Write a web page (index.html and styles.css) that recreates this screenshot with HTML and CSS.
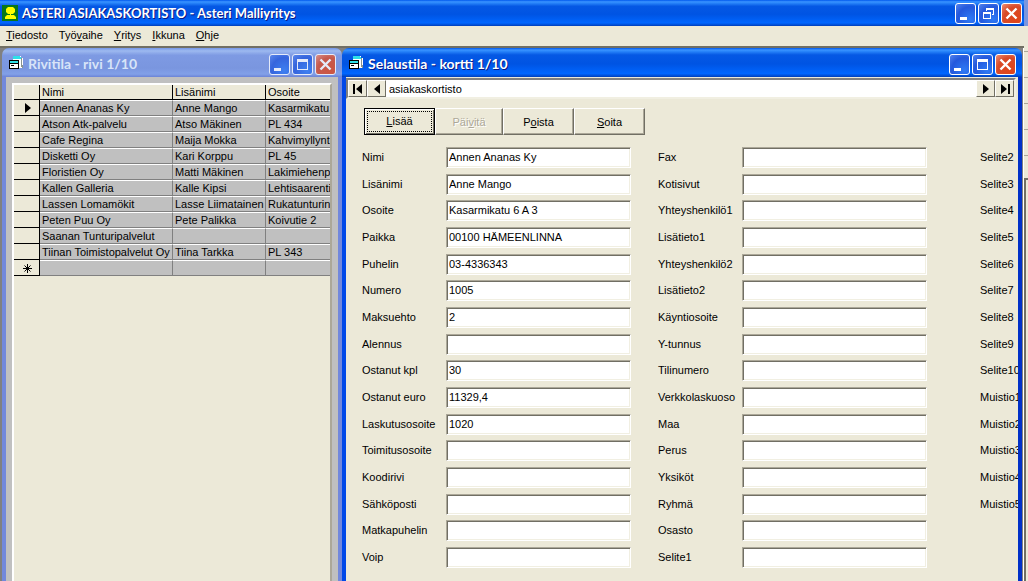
FILE: index.html
```html
<!DOCTYPE html>
<html lang="fi">
<head>
<meta charset="utf-8">
<title>ASTERI ASIAKASKORTISTO - Asteri Malliyritys</title>
<link rel="stylesheet" href="styles.css">
</head>
<body>
<svg class="defs" aria-hidden="true">
  <symbol id="form-icon" viewBox="0 0 16 16">
    <g shape-rendering="crispEdges">
    <path d="M5 0h8v2h2v10H5z" fill="#fff"/><path d="M5 0h7v1h1v2H5z" fill="#2ee0e8"/><path d="M13 2h1v9h-1zM14 9h1v3h-1z" fill="#8a9490"/>
    <path d="M1 4h10v9H1z" fill="#000"/><path d="M2 5h8v2H2z" fill="#2ee0e8"/><path d="M2 8h8v4H2z" fill="#fff"/><path d="M3 9h3v1H3z" fill="#000"/>
    </g>
  </symbol>
  <symbol id="min" viewBox="0 0 19 19"><path d="M4 13h7v3H4z" fill="#fff"/></symbol>
  <symbol id="max" viewBox="0 0 19 19"><path d="M4 4h11v11H4zM5 7v7h9V7z" fill="#fff" fill-rule="evenodd"/></symbol>
  <symbol id="restore" viewBox="0 0 19 19"><path d="M7 4h8v7h-2v-1h1V6H8v1H7zM4 8h8v7H4zM5 10v4h6v-4z" fill="#fff" fill-rule="evenodd"/></symbol>
  <symbol id="close" viewBox="0 0 19 19"><path d="M4.500 4.500l10 10M14.500 4.500l-10 10" stroke="#fff" stroke-width="2.4"/></symbol>
</svg>
<div class="desktop">
  <main class="app">
    <header class="titlebar app-title">
      <svg class="app-icon" viewBox="0 0 16 16"><path d="M0 0h16v16H0z" fill="#087818"/><path d="M6 2h5l2 2v3l-2 2H9v1h3l2 2v2H3v-2l2-2h3V9H6L4 7V4z" fill="#ff0"/></svg>
      <h1>ASTERI ASIAKASKORTISTO - Asteri Malliyritys</h1>
      <div class="controls">
        <button aria-label="Pienennä"><svg><use href="#min"/></svg></button>
        <button aria-label="Palauta"><svg><use href="#restore"/></svg></button>
        <button class="close" aria-label="Sulje"><svg><use href="#close"/></svg></button>
      </div>
    </header>
    <nav class="menu">
      <button><u>T</u>iedosto</button><button>Työ<u>v</u>aihe</button><button><u>Y</u>ritys</button><button><u>I</u>kkuna</button><button><u>O</u>hje</button>
    </nav>
    <div class="workspace">
      <section class="window list-window">
        <header class="titlebar">
          <svg class="form-icon"><use href="#form-icon"/></svg>
          <h2>Rivitila - rivi 1/10</h2>
          <div class="controls">
            <button aria-label="Pienennä"><svg><use href="#min"/></svg></button>
            <button aria-label="Suurenna"><svg><use href="#max"/></svg></button>
            <button class="close" aria-label="Sulje"><svg><use href="#close"/></svg></button>
          </div>
        </header>
        <div class="list-body"><div class="grid-frame">
          <table>
            <colgroup><col class="c-mark"><col class="c-name"><col class="c-extra"><col></colgroup>
            <thead><tr><th></th><th>Nimi</th><th>Lisänimi</th><th>Osoite</th></tr></thead>
            <tbody>
              <tr><th><svg class="mark" viewBox="0 0 12 12"><path d="M4 1l6 5-6 5z"/></svg></th><td>Annen Ananas Ky</td><td>Anne Mango</td><td>Kasarmikatu</td></tr>
              <tr><th></th><td>Atson Atk-palvelu</td><td>Atso Mäkinen</td><td>PL 434</td></tr>
              <tr><th></th><td>Cafe Regina</td><td>Maija Mokka</td><td>Kahvimyllyntie</td></tr>
              <tr><th></th><td>Disketti Oy</td><td>Kari Korppu</td><td>PL 45</td></tr>
              <tr><th></th><td>Floristien Oy</td><td>Matti Mäkinen</td><td>Lakimiehenpo</td></tr>
              <tr><th></th><td>Kallen Galleria</td><td>Kalle Kipsi</td><td>Lehtisaarentie</td></tr>
              <tr><th></th><td>Lassen Lomamökit</td><td>Lasse Liimatainen</td><td>Rukatunturin</td></tr>
              <tr><th></th><td>Peten Puu Oy</td><td>Pete Palikka</td><td>Koivutie 2</td></tr>
              <tr><th></th><td>Saanan Tunturipalvelut</td><td></td><td></td></tr>
              <tr><th></th><td>Tiinan Toimistopalvelut Oy</td><td>Tiina Tarkka</td><td>PL 343</td></tr>
              <tr><th><svg class="mark" viewBox="0 0 12 12"><path d="M6.500 2v9M2 6.500h9M3.500 3.500l6 6M9.500 3.500l-6 6" stroke="#000"/></svg></th><td></td><td></td><td></td></tr>
            </tbody>
          </table>
        </div></div>
      </section>
      <section class="window card-window">
        <header class="titlebar">
          <svg class="form-icon"><use href="#form-icon"/></svg>
          <h2>Selaustila - kortti 1/10</h2>
          <div class="controls">
            <button aria-label="Pienennä"><svg><use href="#min"/></svg></button>
            <button aria-label="Suurenna"><svg><use href="#max"/></svg></button>
            <button class="close" aria-label="Sulje"><svg><use href="#close"/></svg></button>
          </div>
        </header>
        <div class="card-body">
          <div class="record-nav">
            <button aria-label="Ensimmäinen"><svg viewBox="0 0 14 14"><path d="M2 2h2v10H2zM11 2v10L5 7z"/></svg></button>
            <button aria-label="Edellinen"><svg viewBox="0 0 14 14"><path d="M10 2v10L4 7z"/></svg></button>
            <span>asiakaskortisto</span>
            <button aria-label="Seuraava"><svg viewBox="0 0 14 14"><path d="M4 2v10l6-5z"/></svg></button>
            <button aria-label="Viimeinen"><svg viewBox="0 0 14 14"><path d="M10 2h2v10h-2zM3 2v10l6-5z"/></svg></button>
          </div>
          <div class="actions">
            <button class="default"><span><u>L</u>isää</span></button>
            <button class="narrow" disabled>Päi<u>v</u>itä</button>
            <button>P<u>o</u>ista</button>
            <button><u>S</u>oita</button>
          </div>
          <form class="fields">
            <div class="column">
              <label for="a1">Nimi</label><input id="a1" value="Annen Ananas Ky">
              <label for="a2">Lisänimi</label><input id="a2" value="Anne Mango">
              <label for="a3">Osoite</label><input id="a3" value="Kasarmikatu 6 A 3">
              <label for="a4">Paikka</label><input id="a4" value="00100 HÄMEENLINNA">
              <label for="a5">Puhelin</label><input id="a5" value="03-4336343">
              <label for="a6">Numero</label><input id="a6" value="1005">
              <label for="a7">Maksuehto</label><input id="a7" value="2">
              <label for="a8">Alennus</label><input id="a8">
              <label for="a9">Ostanut kpl</label><input id="a9" value="30">
              <label for="a10">Ostanut euro</label><input id="a10" value="11329,4">
              <label for="a11">Laskutusosoite</label><input id="a11" value="1020">
              <label for="a12">Toimitusosoite</label><input id="a12">
              <label for="a13">Koodirivi</label><input id="a13">
              <label for="a14">Sähköposti</label><input id="a14">
              <label for="a15">Matkapuhelin</label><input id="a15">
              <label for="a16">Voip</label><input id="a16">
            </div>
            <div class="column">
              <label for="b1">Fax</label><input id="b1">
              <label for="b2">Kotisivut</label><input id="b2">
              <label for="b3">Yhteyshenkilö1</label><input id="b3">
              <label for="b4">Lisätieto1</label><input id="b4">
              <label for="b5">Yhteyshenkilö2</label><input id="b5">
              <label for="b6">Lisätieto2</label><input id="b6">
              <label for="b7">Käyntiosoite</label><input id="b7">
              <label for="b8">Y-tunnus</label><input id="b8">
              <label for="b9">Tilinumero</label><input id="b9">
              <label for="b10">Verkkolaskuoso</label><input id="b10">
              <label for="b11">Maa</label><input id="b11">
              <label for="b12">Perus</label><input id="b12">
              <label for="b13">Yksiköt</label><input id="b13">
              <label for="b14">Ryhmä</label><input id="b14">
              <label for="b15">Osasto</label><input id="b15">
              <label for="b16">Selite1</label><input id="b16">
            </div>
            <div class="column labels">
              <span>Selite2</span><span>Selite3</span><span>Selite4</span><span>Selite5</span><span>Selite6</span><span>Selite7</span><span>Selite8</span><span>Selite9</span><span>Selite10</span><span>Muistio1</span><span>Muistio2</span><span>Muistio3</span><span>Muistio4</span><span>Muistio5</span>
            </div>
          </form>
        </div>
      </section>
    </div>
  </main>
  <aside class="behind"><div class="b-title"></div><div class="b-row"></div><div class="b-row"></div><div class="b-row"></div><div class="b-row"></div><div class="b-row"></div><div class="b-panel"></div></aside>
</div>
</body>
</html>
```
FILE: styles.css
```css
* { box-sizing: border-box; }
body { margin: 0; background: #ece9d8; color: #000; font: 11px/14px "Liberation Sans", Arial, sans-serif; }
button, input { font: inherit; color: inherit; }
button { padding: 0; }
h1, h2 { margin: 0; font: bold 13px/18px Lato, "Noto Sans", sans-serif; color: #fff; text-shadow: 1px 1px 0 #0a1883; white-space: nowrap; }
h2 { font-size: 14px; }
svg { display: block; }
.defs { display: none; }

.desktop { display: flex; height: 100vh; overflow: hidden; }
.app { flex: 1; min-width: 0; display: flex; flex-direction: column; }

.titlebar { display: flex; align-items: center; gap: 4px; flex: none; background: linear-gradient(#0058ee 0, #3a93ff 7%, #2a87fb 11%, #0558e4 24%, #0054e3 55%, #0066ff 88%, #0050d8 95%, #003db8 100%); }
.app-title { height: 26px; padding: 0 2px; }
.app-icon, .form-icon { width: 16px; height: 16px; flex: none; }
.controls { display: flex; gap: 2px; margin-left: auto; }
.controls button { width: 21px; height: 21px; border: 1px solid #fff; border-radius: 3px; background: radial-gradient(circle at 75% 80%, #2f7af5, #2458dc 60%, #5484ee); }
.controls button.close { background: radial-gradient(circle at 75% 80%, #e0451a, #d84a28 60%, #ef9078); }
.controls svg { width: 19px; height: 19px; }

.menu { display: flex; gap: 11px; height: 20px; padding: 0 0 2px 6px; flex: none; }
.menu button { border: 0; background: none; }

.workspace { flex: 1; min-height: 0; display: flex; padding-right: 2px; background: linear-gradient(to left, #fff 1px, #808080 1px); border-top: 2px solid #716f64; }
.window { display: flex; flex-direction: column; min-width: 0; }
.window .titlebar { height: 29px; padding: 3px 6px 0; border-radius: 7px 7px 0 0; }

.list-window { flex: 0 0 340px; margin-left: 2px; }
.list-window .titlebar { background: linear-gradient(#7697e7, #9db9f0 10%, #7e9ae3 25%, #7a96df 70%, #82a0e8 90%, #6b83d6); }
.list-window h2 { color: #d8e4f8; text-shadow: none; }
.list-window .controls { opacity: .8; }
.list-body { flex: 1; min-height: 0; display: flex; padding: 6px 6px 0; background: #c0c0c0; border: solid #7288dc; border-width: 0 4px; }
.grid-frame { flex: 1; min-width: 0; overflow: hidden; background: #ece9d8; border: solid #fff; border-width: 2px 0 0 2px; border-right: 2px solid #aca899; }

table { width: 100%; table-layout: fixed; border-collapse: separate; border-spacing: 0; }
.c-mark { width: 26px; }
.c-name { width: 133px; }
.c-extra { width: 93px; }
th, td { height: 16px; padding: 0 0 0 2px; overflow: hidden; line-height: 13px; font-weight: normal; text-align: left; white-space: nowrap; }
th { background: #ece9d8; border: solid #000; border-width: 0 1px 1px 0; }
thead th { height: 15px; }
td { background: #c0c0c0; border: solid #808080; border-width: 0 1px 1px 0; border-top: 1px solid #fff; }
th:last-child, td:last-child { border-right: 0; }
.mark { width: 12px; height: 12px; margin-left: 5px; }

.card-window { flex: 1; }
.card-body { flex: 1; min-height: 0; overflow: hidden; background: #ece9d8; border: solid #0048e8; border-width: 0 4px; border-right-color: #0030c8; }
.record-nav { display: flex; align-items: center; height: 21px; margin: 1px 2px 0 0; background: #fff; border: 2px solid #808080; border-right-color: #f1efe2; border-bottom-color: #f1efe2; }
.record-nav span { flex: 1; padding-left: 3px; }
.record-nav button { width: 19px; height: 17px; background: #ece9d8; border: 1px solid; border-color: #fff #716f64 #716f64 #fff; }
.record-nav svg { width: 14px; height: 14px; margin: auto; }

.actions { display: flex; margin: 9px 0 0 18px; }
.actions button { width: 71px; height: 27px; background: #ece9d8; border: 1px solid; border-color: #fff #716f64 #716f64 #fff; box-shadow: inset -1px -1px #aca899; }
.actions .narrow { width: 68px; }
.actions .default { border-color: #000; padding: 2px; box-shadow: inset 1px 1px #fff, inset -1px -1px #716f64; }
.actions .default span { display: block; border: 1px dotted #000; line-height: 19px; }
.actions button:disabled { color: #aca899; text-shadow: 1px 1px #fff; }

.fields { display: flex; gap: 27px; padding: 12px 0 0 16px; }
.column { display: grid; flex: none; grid-template-columns: 84px 185px; grid-template-rows: repeat(5, 27px 26px 27px) 27px; align-items: start; }
.column label, .column span { line-height: 20px; white-space: nowrap; }
.column input { width: 100%; height: 21px; padding: 0 1px 2px 2px; background: #fff; border: 1px solid; border-color: #aca899 #fff #fff #aca899; box-shadow: inset 1px 1px #716f64, inset -1px -1px #f1efe2; border-radius: 0; outline: 0; }
.labels { grid-template-columns: 84px; margin-left: 26px; }

.behind { flex: 0 0 4px; display: flex; flex-direction: column; background: #ece9d8; }
.b-title { height: 26px; background: #7a96df; }
.b-row { height: 26px; border-bottom: 1px solid #aca899; }
.b-panel { flex: 1; margin-top: 22px; border: solid #716f64; border-width: 2px 0 0 2px; }
```
